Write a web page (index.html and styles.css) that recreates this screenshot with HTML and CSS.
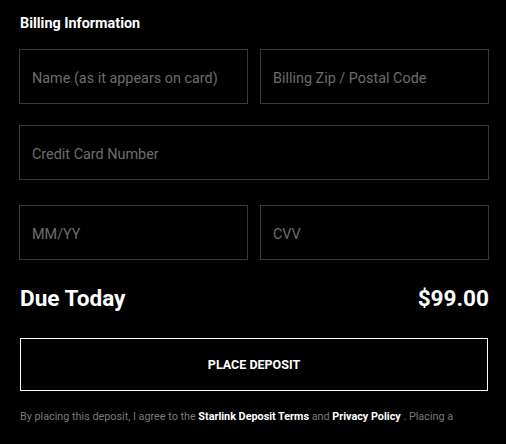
FILE: index.html
```html
<!DOCTYPE html>
<html>
<head>
<meta charset="utf-8">
<link rel="stylesheet" href="styles.css">
</head>
<body>
<div class="page">
  <h2 class="title">Billing Information</h2>
  <div class="row two first">
    <div class="field">Name (as it appears on card)</div>
    <div class="field">Billing Zip / Postal Code</div>
  </div>
  <div class="row second">
    <div class="field">Credit Card Number</div>
  </div>
  <div class="row two">
    <div class="field">MM/YY</div>
    <div class="field">CVV</div>
  </div>
  <div class="due">
    <span>Due Today</span>
    <span>$99.00</span>
  </div>
  <div class="button">PLACE DEPOSIT</div>
  <p class="legal">By placing this deposit, I agree to the <b>Starlink Deposit Terms</b> and <b>Privacy Policy</b> . Placing a</p>
</div>
</body>
</html>
```
FILE: styles.css
```css
html, body {
  margin: 0;
  padding: 0;
  background: #000;
}
body {
  font-family: Roboto, "Liberation Sans", sans-serif;
  color: #fff;
}
.page {
  padding: 16px 17px 0 19px;
}
.title {
  margin: 0 0 17px 1px;
  font-size: 14.4px;
  font-weight: 700;
  line-height: 16px;
}
.row {
  display: grid;
  grid-template-columns: 1fr;
  gap: 12px;
}
.row.two {
  grid-template-columns: 1fr 1fr;
}
.row.first {
  margin-bottom: 21px;
}
.row.second {
  margin-bottom: 25px;
}
.field {
  height: 55px;
  box-sizing: border-box;
  border: 1px solid #3a3a3a;
  display: flex;
  align-items: center;
  padding: 3px 0 0 12px;
  font-size: 14.4px;
  color: #6c6c6c;
}
.due {
  display: flex;
  justify-content: space-between;
  align-items: center;
  margin: 26px 0 0 1px;
  font-size: 22.6px;
  font-weight: 700;
  line-height: 26px;
}
.button {
  margin: 26px 1px 0 1px;
  height: 53px;
  box-sizing: border-box;
  border: 1px solid #fff;
  display: flex;
  align-items: center;
  justify-content: center;
  font-size: 12.5px;
  font-weight: 700;
}
.legal {
  margin: 19px 0 0 1px;
  font-size: 10.8px;
  color: #7a7a7a;
}
.legal b {
  color: #fff;
}
```
